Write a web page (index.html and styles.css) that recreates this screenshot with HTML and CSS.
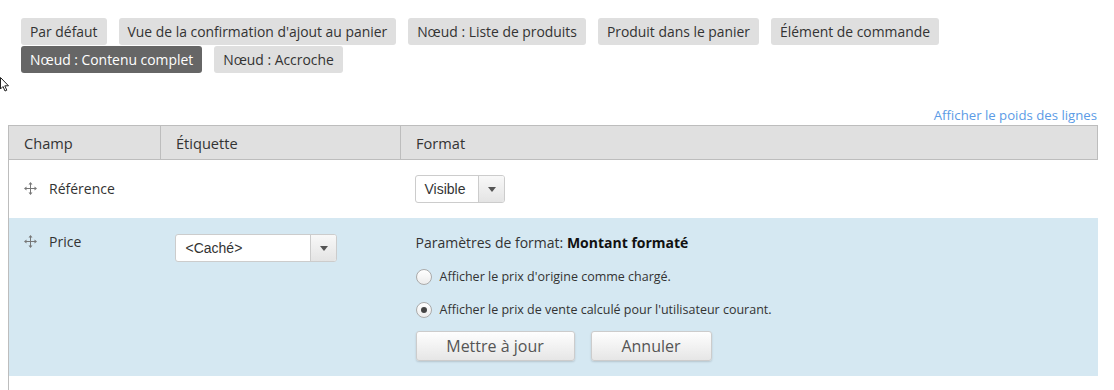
FILE: index.html
```html
<!DOCTYPE html>
<html lang="fr">
<head>
  <meta charset="UTF-8" />
  <title>Gérer l'affichage</title>
  <link rel="stylesheet" href="styles.css">
</head>
<body>
  <svg class="curseur" width="10" height="16" viewBox="0 0 10 16">
    <path d="M0.5 0.5 L0.5 12 L3 9.5 L5 14 L6.8 13.2 L4.8 8.8 L8.5 8.8 Z" fill="#fff" stroke="#222" stroke-width="1"/>
  </svg>

  <div class="page">
    <ul class="onglets">
      <li><a href="#">Par défaut</a></li>
      <li><a href="#">Vue de la confirmation d'ajout au panier</a></li>
      <li><a href="#">Nœud : Liste de produits</a></li>
      <li><a href="#">Produit dans le panier</a></li>
      <li><a href="#">Élément de commande</a></li>
      <li class="actif"><a href="#">Nœud : Contenu complet</a></li>
      <li><a href="#">Nœud : Accroche</a></li>
    </ul>

    <div class="poids"><a href="#">Afficher le poids des lignes</a></div>

    <table class="champs">
      <thead>
        <tr>
          <th class="col-champ">Champ</th>
          <th class="col-etiquette">Étiquette</th>
          <th>Format</th>
        </tr>
      </thead>
      <tbody>
        <tr>
          <td class="nom"><span class="poignee"><svg width="13" height="13" viewBox="0 0 13 13">
            <path d="M6.5 1 V12 M1 6.5 H12" stroke="#777" stroke-width="1"/>
            <path d="M6.5 0 L4.5 2.5 H8.5 Z M6.5 13 L4.5 10.5 H8.5 Z M0 6.5 L2.5 4.5 V8.5 Z M13 6.5 L10.5 4.5 V8.5 Z" fill="#777"/>
          </svg></span>Référence</td>
          <td></td>
          <td>
            <div class="liste liste-visible"><span class="valeur">Visible</span><span class="fleche"></span></div>
          </td>
        </tr>
        <tr class="edition">
          <td class="nom"><span class="poignee"><svg width="13" height="13" viewBox="0 0 13 13">
            <path d="M6.5 1 V12 M1 6.5 H12" stroke="#777" stroke-width="1"/>
            <path d="M6.5 0 L4.5 2.5 H8.5 Z M6.5 13 L4.5 10.5 H8.5 Z M0 6.5 L2.5 4.5 V8.5 Z M13 6.5 L10.5 4.5 V8.5 Z" fill="#777"/>
          </svg></span>Price</td>
          <td>
            <div class="liste liste-cache"><span class="valeur">&lt;Caché&gt;</span><span class="fleche"></span></div>
          </td>
          <td>
            <div class="parametres">Paramètres de format: <strong>Montant formaté</strong></div>
            <label class="option"><span class="radio"></span>Afficher le prix d'origine comme chargé.</label>
            <label class="option"><span class="radio coche"></span>Afficher le prix de vente calculé pour l'utilisateur courant.</label>
            <div class="actions">
              <button class="btn-maj">Mettre à jour</button>
              <button class="btn-annuler">Annuler</button>
            </div>
          </td>
        </tr>
        <tr class="vide">
          <td></td><td></td><td></td>
        </tr>
      </tbody>
    </table>
  </div>
</body>
</html>
```

FILE: styles.css
```css
* {
  box-sizing: border-box;
  margin: 0;
  padding: 0;
}

body {
  font-family: 'Open Sans', sans-serif;
  font-size: 14px;
  color: #333;
  background-color: white;
  position: relative;
  overflow: hidden;
}

a {
  text-decoration: none;
  color: inherit;
}

.curseur {
  position: absolute;
  left: 0;
  top: 77px;
}

.page {
  padding: 18px 16px 0 8px;
}

.onglets {
  list-style: none;
  display: flex;
  flex-wrap: wrap;
  column-gap: 12px;
  row-gap: 1px;
  padding-left: 13px;
}

.onglets li a {
  display: block;
  height: 27px;
  line-height: 27px;
  padding: 0 9px;
  font-size: 13.9px;
  background-color: #dfdfdf;
  border-radius: 3px;
  color: #333;
}

.onglets li.actif a {
  background-color: #666;
  color: white;
}

.poids {
  text-align: right;
  font-size: 13.2px;
  margin-top: 33px;
  line-height: 19px;
  padding-right: 1px;
}

.poids a {
  color: #5b9be6;
}

.champs {
  width: 1090px;
  border-collapse: collapse;
  margin-top: 0;
}

.champs th {
  background-color: #e0e0e0;
  border: 1px solid #bdbdbd;
  font-weight: normal;
  font-size: 14.6px;
  text-align: left;
  height: 34px;
  padding: 0 15px;
  color: #333;
}

.col-champ {
  width: 152px;
}

.col-etiquette {
  width: 240px;
}

.champs td {
  padding: 15px 14px;
  vertical-align: top;
  border-left: 1px solid #bdbdbd;
}

.champs td + td {
  border-left: none;
}

.champs td.nom {
  padding: 0 15px;
  line-height: 58px;
  height: 58px;
}

.poignee {
  display: inline-block;
  width: 25px;
  vertical-align: middle;
  line-height: 0;
  margin-top: -3px;
}

.champs td:last-child {
  padding-left: 15px;
}

.edition td {
  background-color: #d5e8f2;
  padding-top: 16px;
  padding-bottom: 14px;
}

.edition td.nom {
  line-height: 20px;
  padding-top: 14px;
  height: 158px;
}

.vide td {
  height: 14px;
  padding: 0;
}

.liste {
  display: flex;
  height: 28px;
  border: 1px solid #ccc;
  border-radius: 3px;
  background-color: white;
  font-family: 'Liberation Sans', Arial, sans-serif;
  font-size: 14px;
  color: #333;
  overflow: hidden;
}

.liste .valeur {
  flex: 1;
  line-height: 26px;
  padding-left: 9px;
}

.liste .fleche {
  width: 26px;
  border-left: 1px solid #ccc;
  background: linear-gradient(#f8f8f8, #e4e4e4);
  position: relative;
}

.liste .fleche::after {
  content: '';
  position: absolute;
  left: 9px;
  top: 11px;
  border-left: 4px solid transparent;
  border-right: 4px solid transparent;
  border-top: 5px solid #555;
}

.liste-visible {
  width: 90px;
  margin-left: -1px;
}

.liste-cache {
  width: 162px;
}

.liste-cache .valeur {
  padding-left: 10px;
}

.parametres {
  font-size: 14px;
  line-height: 18px;
  margin-bottom: 8px;
}

.parametres strong {
  color: #111;
}

.option {
  display: flex;
  align-items: center;
  height: 33px;
  font-size: 12.5px;
  color: #333;
}

.radio {
  width: 16px;
  height: 16px;
  border-radius: 50%;
  border: 1px solid #aaa;
  background: linear-gradient(#ffffff, #ececec);
  margin: 0 8px 0 0;
  position: relative;
}

.radio.coche::after {
  content: '';
  position: absolute;
  left: 4px;
  top: 4px;
  width: 6px;
  height: 6px;
  border-radius: 50%;
  background-color: #444;
}

.actions {
  display: flex;
  gap: 16px;
  margin-top: 5px;
}

.actions button {
  height: 30px;
  font-family: 'Open Sans', sans-serif;
  font-size: 16px;
  color: #555;
  border: 1px solid #ccc;
  border-radius: 3px;
  background: linear-gradient(#fefefe, #e6e6e6);
  box-shadow: 0 1px 2px rgba(0,0,0,0.15);
}

.btn-maj {
  width: 159px;
}

.btn-annuler {
  width: 121px;
}
```
